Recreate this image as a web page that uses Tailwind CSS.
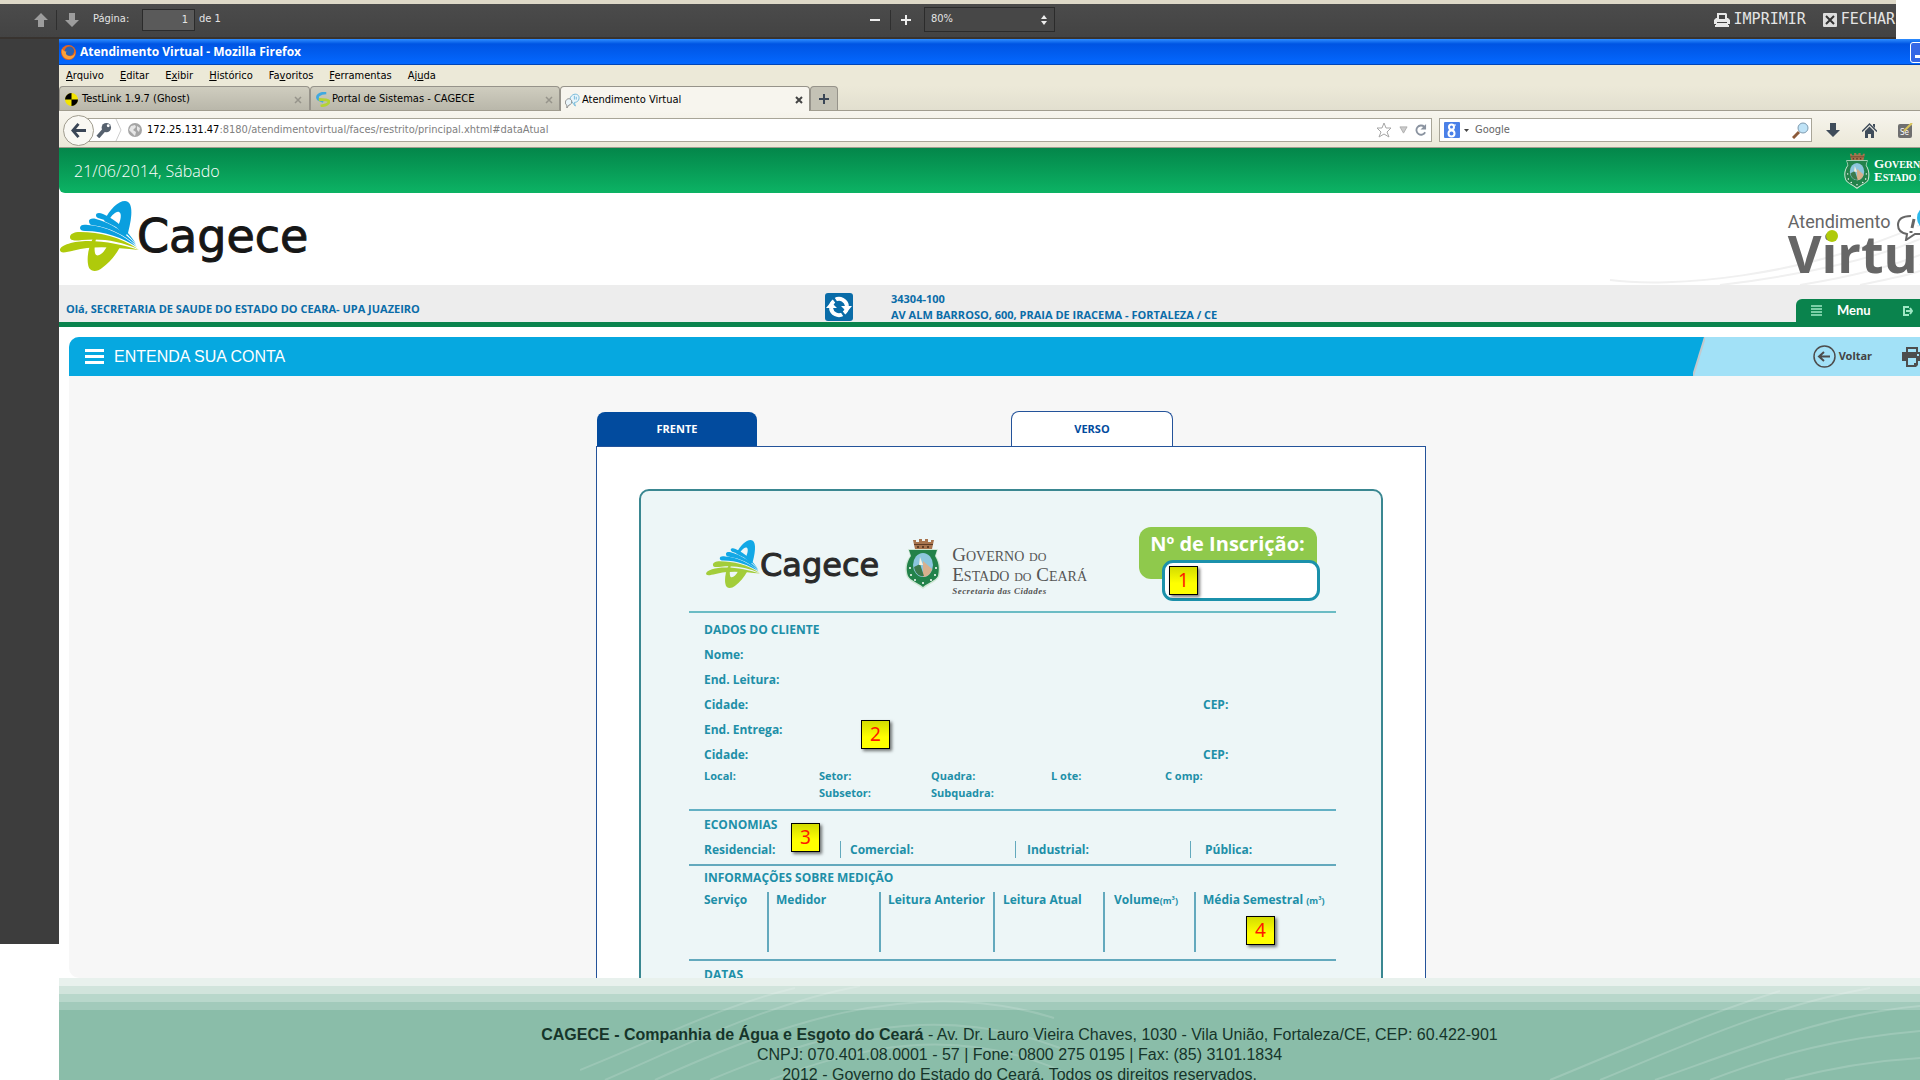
<!DOCTYPE html>
<html lang="pt-BR">
<head>
<meta charset="utf-8">
<title>Atendimento Virtual</title>
<script src="https://cdn.jsdelivr.net/npm/@tailwindcss/browser@4"></script>
</head>
<body class="bg-white">
<svg class="hidden">
  <symbol id="mark" viewBox="0 0 80 70">
    <path fill="var(--b)" fill-rule="evenodd" d="M44 20C50 8 58 0 65 0c8 0 8 14 3 32l-3 3-9-9zM49 19l9 6c3-6 4-13 1-14-3-1-7 3-10 8z"/>
    <g fill="var(--b)">
      <path d="M36 14c0-2 3-3 7-1 14 6 25 17 33 30C66 31 56 22 38 17c-2-1-2-2-2-3z"/>
      <path d="M29 20c0-2 3-3 7-2 15 4 30 14 40 26C63 34 52 27 32 24c-2 0-3-2-3-4z"/>
      <path d="M20 27c0-3 3-4 8-3 18 1 36 10 49 22-14-9-32-16-52-16-3 0-5-1-5-3z"/>
    </g>
    <g fill="var(--g)">
      <path d="M10 36c0-3 4-5 10-5 20 0 40 5 58 17-18-8-36-11-56-9-7 1-12 1-12-3z"/>
      <path d="M0 49c0-5 14-9 28-9 18 0 36 4 51 9-18-2-36-4-52-2C15 48 0 55 0 49z"/>
      <path fill-rule="evenodd" d="M33 37c-5 10-6 20-5 26 1 9 9 8 14 4 7-5 14-13 18-21l-13-1c-4 9-11 12-12 7-1-4 0-10 1-14z"/>
    </g>
  </symbol>
  <symbol id="coat" viewBox="0 0 36 50">
    <path fill="#a8744e" d="M8 1h3v2h3V0h3v2h3V0h3v3h3V1h3l-2 9H10z"/>
    <path fill="#5f3d26" d="M9 5h19v1H9zM12 7h2v2h-2zM17 7h2v2h-2zM22 7h2v2h-2z"/>
    <path fill="#cfe6d4" d="M3 10h30l-2 7c5 7 5 15 3 21-3 5-10 7-16 12C12 45 5 43 2 38-1 31 0 23 5 17z"/>
    <path fill="#23824a" d="M4 11h28l-2 6c5 8 4 15 3 20-3 5-9 6-15 11C12 43 6 42 3 37 1 31 1 24 6 17z"/>
    <ellipse cx="18" cy="26" rx="10" ry="12" fill="#8cc6dd"/>
    <path fill="#d8b08d" d="M18 22l9 8c-1 5-5 8-9 8z"/>
    <path fill="#3c7a4c" d="M9 28l6-3 4 12c-5 1-9-3-10-9z"/>
    <path fill="#f5f1df" d="M15 18l3 8h-4z"/>
    <g fill="#fff"><circle cx="6" cy="36" r="1"/><circle cx="10" cy="41" r="1"/><circle cx="18" cy="44" r="1"/><circle cx="26" cy="41" r="1"/><circle cx="30" cy="36" r="1"/><circle cx="5" cy="29" r="1"/><circle cx="31" cy="29" r="1"/></g>
  </symbol>
</svg>

<div class="flex h-screen flex-col overflow-hidden font-['Liberation_Sans',sans-serif] text-black">

  <!-- Print preview toolbar -->
  <header class="mr-6 flex h-[39px] shrink-0 items-center border-t-4 border-b-2 border-t-[#ded9c8] border-b-[#38332f] bg-gradient-to-b from-[#4b4b4b] to-[#434343] pb-0.5 font-['DejaVu_Sans_Condensed','DejaVu_Sans',sans-serif] text-[11px] text-[#e4e4e4]">
    <div class="flex flex-1 items-center pl-[34px]">
      <button aria-label="Anterior"><svg class="size-[14px]" viewBox="0 0 14 14" fill="#9d9d9d"><path d="M7 0l7 7h-4v7H4V7H0z"/></svg></button>
      <span class="mx-2 h-5 w-px bg-[#2f2f2f]"></span>
      <button aria-label="Próxima"><svg class="size-[14px]" viewBox="0 0 14 14" fill="#9d9d9d"><path d="M7 14L0 7h4V0h6v7h4z"/></svg></button>
      <label for="pg" class="ml-[14px] w-[49px]">Página:</label>
      <input id="pg" value="1" class="h-[22px] w-[53px] border border-[#2b2b2b] bg-[#5a5a5a] pr-1.5 text-right">
      <span class="ml-[4px]">de 1</span>
    </div>
    <div class="mr-[5px] flex items-center">
      <button aria-label="Reduzir"><svg class="size-[12px]" viewBox="0 0 12 12"><path d="M1 6h10" stroke="#eee" stroke-width="2"/></svg></button>
      <span class="mx-[9px] h-5 w-px bg-[#2f2f2f]"></span>
      <button aria-label="Ampliar"><svg class="size-[12px]" viewBox="0 0 12 12"><path d="M1 6h10M6 1v10" stroke="#eee" stroke-width="2"/></svg></button>
      <div class="relative ml-[12px]">
        <select aria-label="Zoom" class="h-[25px] w-[131px] appearance-none border border-[#2b2b2b] bg-[#474747] pl-1.5"><option>80%</option></select>
        <svg class="pointer-events-none absolute top-2 right-2 h-[10px] w-[6px]" viewBox="0 0 6 10" fill="#eee"><path d="M3 0l3 4H0zM3 10l3-4H0z"/></svg>
      </div>
    </div>
    <div class="flex flex-1 items-center justify-end pr-px font-['DejaVu_Sans_Mono',monospace] text-[15px]">
      <button class="mr-[17px] flex items-center gap-1">
        <svg class="h-[14px] w-4" viewBox="0 0 16 14"><path fill="#e8e8e8" d="M3 0h9l1 1v4h1l2 2v4h-2v1h1v2H1v-2h1v-1H0V7l2-2h1z"/><path fill="#444" d="M5 2h6v4H5zM3 9h10v1H3z"/></svg>IMPRIMIR</button>
      <button class="flex items-center gap-1">
        <svg class="size-[14px]" viewBox="0 0 14 14"><rect width="14" height="14" rx="1" fill="#ddd"/><path d="M3 3l8 8M11 3l-8 8" stroke="#333" stroke-width="2"/></svg>FECHAR</button>
    </div>
  </header>

  <div class="flex min-h-0 flex-1">
    <aside class="mb-[136px] w-[59px] shrink-0 bg-[#3d3d3d]"></aside>

    <!-- Browser window: wider than the screen, its right end is off view -->
    <div class="-mr-[60px] flex min-w-0 flex-1 flex-col">
      <div class="flex h-[26px] shrink-0 items-center border-b border-[#0045b8] bg-gradient-to-b from-[#2f8dff] via-[#0054e3] via-20% to-[#0468ff] pt-px pl-0.5 font-['Open_Sans',sans-serif] text-[12px] font-bold text-white">
        <svg class="mr-[4px] size-[15px]" viewBox="0 0 16 16"><circle cx="8" cy="8" r="8" fill="#e8641b"/><circle cx="9" cy="6.500" r="5" fill="#2b63b3"/><path fill="#f9a23b" d="M1 4c1 2 3 3 5 3-2 2 0 5 4 5 3 0 5-2 5-5 1 5-3 9-8 8C2 14 0 9 1 4z"/></svg>
        <span class="flex-1">Atendimento Virtual - Mozilla Firefox</span>
        <button aria-label="Minimizar" class="mr-[49px] flex h-[21px] w-[21px] items-end rounded-[3px] border border-white bg-[#3568e6] p-1"><span class="h-[3px] w-2 bg-white"></span></button>
      </div>

      <nav class="flex h-[21px] shrink-0 items-center gap-4 bg-[#ece9d8] pt-0.5 pl-[7px] font-['DejaVu_Sans_Condensed','DejaVu_Sans',sans-serif] text-[11px]">
        <a href="#"><u>A</u>rquivo</a><a href="#"><u>E</u>ditar</a><a href="#">E<u>x</u>ibir</a><a href="#"><u>H</u>istórico</a><a href="#">Fa<u>v</u>oritos</a><a href="#"><u>F</u>erramentas</a><a href="#">Aj<u>u</u>da</a>
      </nav>

      <div class="flex h-[25px] shrink-0 border-b border-[#a09c8e] bg-gradient-to-b from-[#ece9d8] to-[#e2dfcf] font-['DejaVu_Sans_Condensed','DejaVu_Sans',sans-serif] text-[11px]">
        <div class="flex w-[251px] items-center rounded-t-sm border border-b-0 border-[#96938a] bg-gradient-to-b from-[#cfcdbf] to-[#b9b7aa] pt-0.5 pr-[7px] pl-[5px]">
          <svg class="mr-[4px] size-[13px]" viewBox="0 0 14 14"><circle cx="7" cy="7" r="7" fill="#f3e400"/><path d="M7 0a7 7 0 0 0-7 7h7zM7 14a7 7 0 0 0 7-7H7z"/></svg>
          <a href="#" class="flex-1">TestLink 1.9.7 (Ghost)</a><button aria-label="Fechar aba"><svg class="size-2" viewBox="0 0 8 8"><path d="M1 1l6 6M7 1L1 7" stroke="#96948b" stroke-width="1.500"/></svg></button>
        </div>
        <div class="flex w-[250px] items-center rounded-t-sm border border-b-0 border-[#96938a] bg-gradient-to-b from-[#cfcdbf] to-[#b9b7aa] pt-0.5 pr-1.5 pl-1">
          <svg class="mr-0.5 size-[15px]" viewBox="0 0 16 16" fill="none" stroke-width="3"><path d="M12 1C5 1 0 5 4 8l5 2" stroke="#3fa9e0"/><path d="M4 8c5 0 10 0 11 2 0 3-4 4-9 5" stroke="#b4d334"/></svg>
          <a href="#" class="flex-1">Portal de Sistemas - CAGECE</a><button aria-label="Fechar aba"><svg class="size-2" viewBox="0 0 8 8"><path d="M1 1l6 6M7 1L1 7" stroke="#96948b" stroke-width="1.500"/></svg></button>
        </div>
        <div class="-mb-px flex w-[250px] items-center rounded-t-sm border border-b-0 border-[#96938a] bg-[#f7f5ee] pt-0.5 pr-1.5 pl-1">
          <svg class="mr-0.5 size-[15px]" viewBox="0 0 16 16" fill="#e9f5fb" stroke="#6fb6d8"><path d="M7 3c3-3 8-2 8 2s-3 5-5 5l1 4-4-5C5 7 5 5 7 3z"/><path d="M1 8c2-3 5-2 6 0s-1 5-3 5l-2 3v-3C0 12 0 10 1 8z" stroke="#888"/><path d="M10 3v4M12 4v3"/></svg>
          <a href="#" class="flex-1">Atendimento Virtual</a><button aria-label="Fechar aba"><svg class="size-2" viewBox="0 0 8 8"><path d="M1 1l6 6M7 1L1 7" stroke="#444" stroke-width="2"/></svg></button>
        </div>
        <button aria-label="Nova aba" class="flex w-7 items-center justify-center rounded-t-sm border border-b-0 border-[#96938a] bg-[#c4c2b5]"><svg class="size-[10px]" viewBox="0 0 10 10"><path d="M0 5h10M5 0v10" stroke="#3a4656" stroke-width="2"/></svg></button>
      </div>

      <!-- Address bar -->
      <div class="flex h-[37px] shrink-0 items-center border-b border-[#a09c8e] bg-gradient-to-b from-[#f7f5ee] to-[#ebe8d8] pt-0.5 pl-1 font-['DejaVu_Sans_Condensed','DejaVu_Sans',sans-serif] text-[11px] text-[#808080]">
        <button aria-label="Voltar página" class="z-10 flex size-[31px] shrink-0 items-center justify-center rounded-full border border-[#a09c8e] bg-[#f9f8f3]"><svg class="size-[15px]" viewBox="0 0 16 16" fill="none" stroke="#3a4656" stroke-width="3"><path d="M8 1L2 8l6 7M2 8h14"/></svg></button>
        <div class="-ml-3 flex h-6 flex-1 items-center border border-[#a8a598] bg-white pl-[13px]">
          <svg class="size-[16px]" viewBox="0 0 17 17"><circle cx="11" cy="6" r="5" fill="#56616e"/><circle cx="13" cy="4" r="1.500" fill="#fff"/><path d="M9 8l-7 8" stroke="#56616e" stroke-width="4"/></svg>
          <svg class="ml-[3px] h-[22px] w-[7px]" viewBox="0 0 7 22"><path d="M1 0l5 11-5 11" fill="none" stroke="#ccc"/></svg>
          <svg class="mr-[5px] ml-[6px] size-[14px]" viewBox="0 0 14 14"><circle cx="7" cy="7" r="7" fill="#a5a5a5"/><path fill="#e6e6e6" d="M3 3l4-1 1 2-3 3 3 2-1 4-3-3-3-3zM9 3l3 2-1 4-2-2z"/></svg>
          <span class="flex-1"><span class="text-black">172.25.131.47</span>:8180/atendimentovirtual/faces/restrito/principal.xhtml#dataAtual</span>
          <svg class="size-[16px]" viewBox="0 0 16 16" fill="#fff" stroke="#a6a6a6"><path d="M8 1l2 5h5l-4 4 2 5-5-3-5 3 2-5-4-4h5z"/></svg>
          <svg class="mx-[7px] h-2 w-[9px]" viewBox="0 0 10 9" fill="#ccc" stroke="#aaa"><path d="M1 1h8L5 8z"/></svg>
          <svg class="mr-1 size-[12px]" viewBox="0 0 13 13"><path d="M10 3a5 5 0 1 0 1 6" fill="none" stroke="#8a93a0" stroke-width="2"/><path d="M12 0v6H6z" fill="#8a93a0"/></svg>
        </div>
        <div class="ml-[7px] flex h-6 w-[373px] items-center border border-[#a8a598] bg-white pl-1">
          <svg class="size-[16px]" viewBox="0 0 16 16"><rect width="16" height="16" rx="1" fill="#4a80e8"/><g fill="none" stroke="#fff" stroke-width="2"><circle cx="7.500" cy="5" r="2.500"/><circle cx="7.500" cy="11.500" r="3"/></g><path d="M9 3h3" stroke="#fff"/></svg>
          <svg class="mr-1.5 ml-1 h-[3px] w-[5px]" viewBox="0 0 5 3"><path d="M0 0h5L2.500 3z" fill="#444"/></svg>
          <input aria-label="Pesquisa" placeholder="Google" class="min-w-0 flex-1 placeholder:text-[#666]">
          <svg class="mr-[2px] size-[17px]" viewBox="0 0 17 17"><path d="M7 10l-6 6" stroke="#8c5a3a" stroke-width="3"/><circle cx="11" cy="6" r="5" fill="#bfe3f7" stroke="#7e9bb0"/></svg>
        </div>
        <svg class="ml-[14px] h-[14px] w-[14px]" viewBox="0 0 14 14" fill="#3f4c5a"><path d="M7 14L0 7h4V0h6v7h4z"/></svg>
        <svg class="ml-[22px] size-[15px]" viewBox="0 0 15 15"><path fill="#3f4c5a" d="M7.500 0l8 8-1 1-7-7-7 7-1-1zM3 8l4.500-4.500L12 8v7H9v-4H6v4H3zM11 1h2v4l-2-2z"/></svg>
        <svg class="mr-[67px] ml-[21px] size-[15px] shrink-0" viewBox="0 0 15 15"><rect y="1" width="14" height="14" rx="2" fill="#6f6f6f"/><text x="2" y="12" font-size="8" fill="#fff">Se</text><path d="M14 0L6 8" stroke="#d9c45a" stroke-width="2"/></svg>
      </div>

      <!-- Date strip -->
      <div class="flex h-[45px] shrink-0 items-center rounded-bl-md bg-gradient-to-b from-[#04864a] to-[#0cb364] pr-[18px] pl-[15px] text-white">
        <span class="flex-1 font-['Open_Sans',sans-serif] text-[16px] font-light">21/06/2014, Sábado</span>
        <svg class="h-9 w-[26px]"><use href="#coat"/></svg>
        <div class="ml-1 w-[88px] font-['Liberation_Serif',serif] text-[13px] leading-3 font-bold whitespace-nowrap">G<span class="text-[10px]">OVERNO DO</span><br>E<span class="text-[10px]">STADO DO</span> C<span class="text-[10px]">EARÁ</span></div>
      </div>

      <!-- Brand header -->
      <div class="relative flex h-[92px] shrink-0 items-start justify-between bg-white pt-[7px] pl-px">
        <svg class="absolute right-[60px] bottom-0 h-[60px] w-[320px]" viewBox="0 0 320 60" fill="none" stroke="#f0f0f0" stroke-width="2"><path d="M10 55c60 8 190-2 310-55M120 60c70-8 150-24 200-46M200 60c50-8 90-18 120-30M260 60c30-6 50-10 60-14"/></svg>
        <a href="#" class="flex items-center [--b:#0a9fdf] [--g:#afca0b]">
          <svg class="h-[70px] w-20"><use href="#mark"/></svg>
          <span class="-ml-[3px] font-['DejaVu_Sans',sans-serif] text-[46px] leading-[72px] text-[#161616] [-webkit-text-stroke:1px]">Cagece</span>
        </a>
        <div class="relative mr-[15px] pt-[12px] font-['Open_Sans',sans-serif] text-[#666]">
          <div class="font-['Roboto',sans-serif] text-[18px] leading-5">Atendimento</div>
          <div class="text-[52px] leading-[42px] font-bold">Virtual</div>
          <svg class="absolute top-[9px] left-[109px] h-8 w-12" viewBox="0 0 48 32"><path d="M14 7C3 7 1 12 1 16c0 5 3 8 9 9l-1 6 9-6h7" fill="#fff" stroke="#666" stroke-width="2"/><path d="M17 10l-2 9M14 22v2" stroke="#666" stroke-width="3"/><circle cx="33" cy="9" r="13" fill="#2cb9ec"/></svg>
          <span class="absolute top-[30px] left-[38px] size-3 rounded-full bg-[#afca0b]"></span>
        </div>
      </div>

      <!-- Customer strip -->
      <div class="flex h-[42px] shrink-0 border-b-[5px] border-[#0a834d] bg-[#ededed] pl-[7px] font-['Open_Sans',sans-serif] text-[11px] font-bold text-[#0a6ca8]">
        <span class="w-[759px] pt-4">Olá, SECRETARIA DE SAUDE DO ESTADO DO CEARA- UPA JUAZEIRO</span>
        <button aria-label="Trocar imóvel" class="mt-2 size-7"><svg class="size-7" viewBox="0 0 28 28"><rect width="28" height="28" rx="3" fill="#0a6ca8"/><g fill="none" stroke="#fff" stroke-width="4"><path d="M6 15a8 8 0 0 0 12 6M22 13a8 8 0 0 0-12-6"/><path d="M6 14a8 8 0 0 1 3-6M22 14a8 8 0 0 1-3 6"/></g><path fill="#fff" d="M1 15l5-6 6 6zM27 13l-5 6-6-6z"/><path stroke="#0a6ca8" stroke-width="2" d="M8 4l4 6M20 24l-4-6"/></svg></button>
        <address class="ml-[38px] flex-1 pt-1.5 leading-4 not-italic">34304-100<br>AV ALM BARROSO, 600, PRAIA DE IRACEMA - FORTALEZA / CE</address>
        <div class="mt-[14px] flex w-[184px] items-center rounded-tl-md bg-[#0a834d] pl-[15px] font-['Lato',sans-serif] text-[13px] text-white">
          <svg class="h-[11px] w-[11px]" viewBox="0 0 11 11"><path d="M0 1h11M0 4h11M0 7h11M0 10h11" stroke="#9fe8c4" stroke-width="1.500"/></svg>
          <a href="#" class="ml-[15px] w-[66px]">Menu</a>
          <svg class="size-[10px]" viewBox="0 0 10 10" fill="none" stroke="#9fe8c4" stroke-width="2"><path d="M6 1H1v8h5M3 5h6M7 2l2 3-2 3"/></svg>
        </div>
      </div>

      <!-- Page content -->
      <main class="flex min-h-0 flex-1 flex-col pt-[10px] pl-[10px]">
        <div class="flex h-[39px] shrink-0 items-center overflow-hidden rounded-tl-[10px] bg-[#a2e1f7]">
          <h1 class="flex h-full flex-1 items-center bg-[#06a8e0] pl-4 text-[16px] text-white">
            <svg class="mr-[10px] h-[15px] w-[19px]" viewBox="0 0 19 15"><path d="M0 1.500h19M0 7.500h19M0 13.500h19" stroke="#fff" stroke-width="3"/></svg>ENTENDA SUA CONTA</h1>
          <svg class="h-[39px] w-3" viewBox="0 0 12 39"><path fill="#06a8e0" d="M0 0h12L0 39z"/><path d="M12 0L0 39" stroke="#c3c9cd" stroke-width="2"/></svg>
          <a href="#" class="ml-[108px] flex items-center gap-[3px] font-['Noto_Sans',sans-serif] text-[11px] font-bold text-[#444]">
            <svg class="size-[23px]" viewBox="0 0 23 23" fill="none" stroke="#4d4d4d"><circle cx="11.500" cy="11.500" r="10.500" stroke-width="1.500"/><path stroke-width="2" d="M11 7l-5 4.500 5 4.500M6 11.500h11"/></svg>Voltar</a>
          <button aria-label="Imprimir" class="mr-[58px] ml-[30px]"><svg class="h-5 w-[20px]" viewBox="0 0 20 20"><path fill="#4d4d4d" d="M4 0h12v5h4v9h-4v4l-2 2H4v-6H0V5h4z"/><path fill="#a2e1f7" d="M6 2h8v3H6zM6 11h8v5h-2v2H6zM15 7h2v2h-2z"/></svg></button>
        </div>

        <div class="flex min-h-0 flex-1 flex-col items-center overflow-hidden rounded-bl-[10px] bg-[#f7f7f7] pt-[35px] pr-[27px]">
          <div class="w-[830px] shrink-0">
            <div class="flex h-[35px] items-end font-['Open_Sans',sans-serif] text-[11px] font-bold">
              <button class="ml-px h-[34px] w-[160px] rounded-t-lg bg-[#024b9e] text-white">FRENTE</button>
              <button class="ml-[254px] h-[35px] w-[162px] rounded-t-lg border border-b-0 border-[#24539a] bg-white text-[#024b9e]">VERSO</button>
            </div>
            <section class="border border-[#24539a] bg-white px-[42px] pt-[42px] pb-10">
              <div class="relative rounded-[10px] border-2 border-[#3a8791] bg-[#edf6f7] pr-[45px] pl-12 font-['Open_Sans',sans-serif] text-[12px] font-bold text-[#208fa8]">
                <div class="flex h-[120px] items-start">
                  <div class="mt-[48px] ml-[17px] flex items-center [--b:#12a8e6] [--g:#a3cd3a]">
                    <svg class="h-12 w-[55px]"><use href="#mark"/></svg>
                    <span class="-ml-px pt-0.5 font-['DejaVu_Sans',sans-serif] text-[32px] leading-[48px] font-normal text-[#2a2a2a] [-webkit-text-stroke:1px]">Cagece</span>
                  </div>
                  <svg class="mt-[48px] ml-[26px] h-[50px] w-9"><use href="#coat"/></svg>
                  <div class="mt-[55px] ml-[11px] w-[186px] font-['Liberation_Serif',serif] text-[19px] leading-[17px] font-normal whitespace-nowrap text-[#555]">G<span class="text-[14px]">OVERNO</span> <span class="text-[12px]">DO</span><br>E<span class="text-[14px]">STADO</span> <span class="text-[12px]">DO</span> C<span class="text-[14px]">EARÁ</span><div class="text-[9px] leading-[10px] font-bold tracking-wider italic">Secretaria das Cidades</div></div>
                  <div class="relative mt-9 ml-px h-[52px] w-[178px] rounded-xl bg-[#8fc94c] pl-[11px]">
                    <label for="insc" class="text-[20px] leading-[33px] whitespace-nowrap text-white">Nº de Inscrição:</label>
                    <input id="insc" class="absolute top-[33px] left-[23px] h-[41px] w-[158px] rounded-[11px] border-3 border-[#1b91ab] bg-white">
                  </div>
                </div>

                <div class="border-t-2 border-[#6bbcc4] pt-1 pb-2 pl-[15px]">
                  <h2 class="leading-[25px]">DADOS DO CLIENTE</h2>
                  <div class="grid grid-cols-[499px_1fr] leading-[25px]">
                    <span class="col-span-2">Nome:</span>
                    <span class="col-span-2">End. Leitura:</span>
                    <span>Cidade:</span><span>CEP:</span>
                    <span class="col-span-2">End. Entrega:</span>
                    <span>Cidade:</span><span>CEP:</span>
                  </div>
                  <div class="grid grid-cols-[115px_112px_120px_114px_1fr] text-[11px] leading-[17px]">
                    <span>Local:</span><span>Setor:</span><span>Quadra:</span><span>L ote:</span><span>C omp:</span>
                    <span></span><span>Subsetor:</span><span>Subquadra:</span>
                  </div>
                </div>

                <div class="border-t-2 border-[#63b0c4] pt-px pb-[3px] pl-[15px]">
                  <h2 class="leading-[25px]">ECONOMIAS</h2>
                  <div class="grid h-6 grid-cols-[136px_175px_175px_1fr] items-center leading-[17px]">
                    <span>Residencial:</span>
                    <span class="border-l border-[#63a9bd] pl-[9px]">Comercial:</span>
                    <span class="border-l border-[#63a9bd] pl-[11px]">Industrial:</span>
                    <span class="border-l border-[#63a9bd] pl-[14px]">Pública:</span>
                  </div>
                </div>

                <div class="border-t-2 border-[#63a9bd] pb-[7px] pl-[15px]">
                  <h2 class="leading-6">INFORMAÇÕES SOBRE MEDIÇÃO</h2>
                  <table class="mt-0.5 w-full table-fixed text-left leading-[15px]">
                    <colgroup><col class="w-[64px]"><col class="w-[112px]"><col class="w-[114px]"><col class="w-[110px]"><col class="w-[91px]"><col></colgroup>
                    <thead><tr class="h-[60px] align-top whitespace-nowrap">
                      <th>Serviço</th>
                      <th class="border-l-2 border-[#63a9bd] pl-[7px]">Medidor</th>
                      <th class="border-l-2 border-[#63a9bd] pl-[7px]">Leitura Anterior</th>
                      <th class="border-l-2 border-[#63a9bd] pl-[8px]">Leitura Atual</th>
                      <th class="border-l-2 border-[#63a9bd] pl-[9px]">Volume<small class="text-[9px]">(m³)</small></th>
                      <th class="border-l-2 border-[#63a9bd] pl-[7px]">Média Semestral <small class="text-[9px]">(m³)</small></th>
                    </tr></thead>
                  </table>
                </div>

                <div class="h-[140px] border-t-2 border-[#63a9bd] pt-px pl-[15px]">
                  <h2 class="leading-[25px]">DATAS</h2>
                </div>

                <!-- Numbered callouts laid over the bill -->
                <div class="font-['Noto_Sans',sans-serif] text-[19px] leading-[27px] font-normal text-[#ff1800]">
                  <span class="absolute top-[75px] left-[528px] size-[29px] border border-black bg-gradient-to-b from-[#d3dc00] to-[#ffff00] to-60% text-center shadow-[2px_2px_3px_#0008]">1</span>
                  <span class="absolute top-[229px] left-[220px] size-[29px] border border-black bg-gradient-to-b from-[#d3dc00] to-[#ffff00] to-60% text-center shadow-[2px_2px_3px_#0008]">2</span>
                  <span class="absolute top-[332px] left-[150px] size-[29px] border border-black bg-gradient-to-b from-[#d3dc00] to-[#ffff00] to-60% text-center shadow-[2px_2px_3px_#0008]">3</span>
                  <span class="absolute top-[425px] left-[605px] size-[29px] border border-black bg-gradient-to-b from-[#d3dc00] to-[#ffff00] to-60% text-center shadow-[2px_2px_3px_#0008]">4</span>
                </div>
              </div>
            </section>
          </div>
        </div>
      </main>

      <footer class="relative h-[102px] shrink-0 overflow-hidden bg-[#8abda9]">
        <div class="h-2 bg-[#e8f1ed]"></div><div class="h-2 bg-[#d1e4dc]"></div><div class="h-2 bg-[#b8d7cb]"></div><div class="h-2 bg-[#a2cabb]"></div>
        <svg class="absolute top-0 left-[521px] h-[102px] w-[560px]" viewBox="0 0 560 102" fill="none" stroke="#fff" stroke-opacity=".15" stroke-width="2"><path d="M0 92C80 60 140 28 215 10M25 102C110 65 190 25 280 8M75 102C190 50 330-5 474 40M130 102C230 60 350 20 480 70M190 102C270 72 380 40 500 102"/></svg>
        <svg class="absolute top-0 right-[60px] h-[102px] w-[380px]" viewBox="0 0 380 102" fill="none" stroke="#fff" stroke-opacity=".17" stroke-width="2"><path d="M10 102C100 65 160 38 240 13M60 102C150 65 230 28 330 10M115 102C220 65 290 36 380 28M170 102C240 75 300 60 380 53M245 102C290 90 330 83 380 80"/></svg>
        <p class="relative pt-[15px] text-center text-[16px] leading-5 text-[#16352a]"><b>CAGECE - Companhia de Água e Esgoto do Ceará</b> - Av. Dr. Lauro Vieira Chaves, 1030 - Vila União, Fortaleza/CE, CEP: 60.422-901<br>CNPJ: 070.401.08.0001 - 57 | Fone: 0800 275 0195 | Fax: (85) 3101.1834<br>2012 - Governo do Estado do Ceará. Todos os direitos reservados.</p>
      </footer>
    </div>
  </div>
</div>
</body>
</html>
